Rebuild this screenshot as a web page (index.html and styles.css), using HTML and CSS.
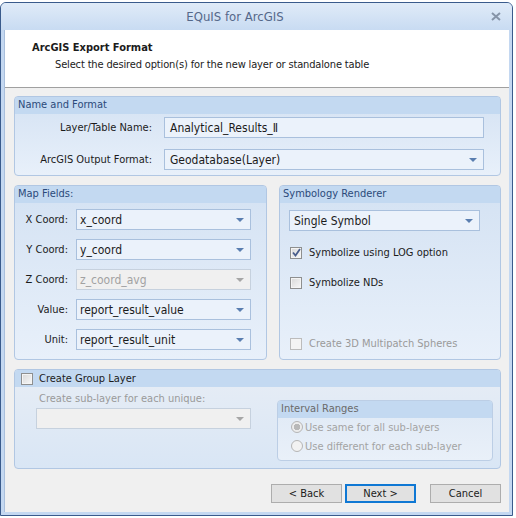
FILE: index.html
```html
<!DOCTYPE html>
<html lang="en">
<head>
    <meta charset="UTF-8">
    <title>EQuIS for ArcGIS</title>
    <link rel="stylesheet" href="styles.css">
</head>
<body>
    <div class="window">
        <div class="titlebar">
            <span class="title">EQuIS for ArcGIS</span>
            <svg class="close" width="10" height="9" viewBox="0 0 10 9">
                <path d="M1 1 L9 8 M9 1 L1 8" stroke="#8694a8" stroke-width="2" fill="none"/>
            </svg>
        </div>
        <div class="client">
            <div class="banner">
                <div class="banner-title">ArcGIS Export Format</div>
                <div class="banner-sub">Select the desired option(s) for the new layer or standalone table</div>
            </div>
            <div class="content">
                <section class="group group-name">
                    <div class="group-head">Name and Format</div>
                    <div class="name-grid">
                        <label>Layer/Table Name:</label>
                        <div class="field">Analytical_Results_Ⅱ</div>
                        <label>ArcGIS Output Format:</label>
                        <div class="combo"><span>Geodatabase(Layer)</span><i class="arrow"></i></div>
                    </div>
                </section>

                <div class="row-2">
                    <section class="group group-map">
                        <div class="group-head">Map Fields:</div>
                        <div class="map-grid">
                            <label>X Coord:</label>
                            <div class="combo"><span>x_coord</span><i class="arrow"></i></div>
                            <label>Y Coord:</label>
                            <div class="combo"><span>y_coord</span><i class="arrow"></i></div>
                            <label>Z Coord:</label>
                            <div class="combo disabled"><span>z_coord_avg</span><i class="arrow"></i></div>
                            <label>Value:</label>
                            <div class="combo"><span>report_result_value</span><i class="arrow"></i></div>
                            <label>Unit:</label>
                            <div class="combo"><span>report_result_unit</span><i class="arrow"></i></div>
                        </div>
                    </section>

                    <section class="group group-sym">
                        <div class="group-head">Symbology Renderer</div>
                        <div class="sym-body">
                            <div class="combo"><span>Single Symbol</span><i class="arrow"></i></div>
                            <div class="check-row row-log">
                                <span class="check">
                                    <svg width="9" height="9" viewBox="0 0 9 9"><path d="M1 4.5 L3.5 7.5 L8 1" stroke="#4a5e8c" stroke-width="1.8" fill="none"/></svg>
                                </span>
                                <span>Symbolize using LOG option</span>
                            </div>
                            <div class="check-row row-nd">
                                <span class="check"></span>
                                <span>Symbolize NDs</span>
                            </div>
                            <div class="check-row row-3d disabled">
                                <span class="check"></span>
                                <span>Create 3D Multipatch Spheres</span>
                            </div>
                        </div>
                    </section>
                </div>

                <section class="group group-layer">
                    <div class="group-head layer-head">
                        <span class="check"></span>
                        <span>Create Group Layer</span>
                    </div>
                    <div class="layer-body">
                        <div class="sublayer">
                            <div class="sublayer-label">Create sub-layer for each unique:</div>
                            <div class="combo disabled"><span></span><i class="arrow"></i></div>
                        </div>
                        <section class="group group-interval">
                            <div class="group-head">Interval Ranges</div>
                            <div class="radio-row">
                                <span class="radio selected"></span>
                                <span>Use same for all sub-layers</span>
                            </div>
                            <div class="radio-row">
                                <span class="radio"></span>
                                <span>Use different for each sub-layer</span>
                            </div>
                        </section>
                    </div>
                </section>

                <div class="buttons">
                    <button class="btn btn-back">&lt; Back</button>
                    <button class="btn btn-next">Next &gt;</button>
                    <button class="btn btn-cancel">Cancel</button>
                </div>
            </div>
        </div>
    </div>
</body>
</html>
```

FILE: styles.css
```css
* {
    box-sizing: border-box;
}
body {
    margin: 0;
    background: #ffffff;
    font-family: "DejaVu Sans Condensed", "DejaVu Sans", sans-serif;
    font-size: 11px;
    color: #1b1b1b;
}
.window {
    margin-top: 2px;
    width: 513px;
    height: 514px;
    border: 1px solid #3a5b8c;
    border-radius: 6px 6px 0 0;
    background: #c4d8f1;
    display: flex;
    flex-direction: column;
}
.titlebar {
    height: 27px;
    flex: none;
    display: flex;
    align-items: center;
    background: linear-gradient(#e0ebf8, #c8dbf2);
    border-radius: 5px 5px 0 0;
}
.title {
    flex: 1;
    text-align: center;
    padding-right: 22px;
    font-size: 13px;
    color: #55688a;
}
.close {
    margin-right: 11px;
}
.client {
    flex: 1;
    margin: 0 3px 3px 3px;
    background: #f0f0f0;
    border-left: 1px solid #a9bfdc;
    display: flex;
    flex-direction: column;
}
.banner {
    height: 58px;
    background: #ffffff;
    border-bottom: 1px solid #a0a0a0;
    padding: 11px 0 0 27px;
}
.banner-title {
    font-weight: bold;
    line-height: 14px;
}
.banner-sub {
    margin-top: 3px;
    padding-left: 23px;
    line-height: 14px;
    letter-spacing: -0.15px;
}
.content {
    padding: 8px 8px 0 9px;
}

/* group boxes */
.group {
    border: 1px solid #b1c7e3;
    border-radius: 4px;
    background: linear-gradient(#d4e2f3, #e8f0fa);
    overflow: hidden;
}
.group-head {
    height: 17px;
    line-height: 16px;
    padding-left: 3px;
    background: #c3d9f1;
    color: #2b4a7a;
}
.group-name {
    height: 80px;
}
.name-grid {
    display: grid;
    grid-template-columns: 130px 320px;
    grid-auto-rows: 21px;
    column-gap: 12px;
    row-gap: 11px;
    padding: 3px 0 0 7px;
    align-items: center;
}
.name-grid label, .map-grid label {
    text-align: right;
    white-space: nowrap;
}
.field, .combo {
    height: 21px;
    border: 1px solid #a9c0dd;
    background: #ebf2fb;
    display: flex;
    align-items: center;
    padding: 0 6px 0 5px;
    font-size: 12px;
}
.combo span {
    flex: 1;
    white-space: nowrap;
}
.arrow {
    width: 0;
    height: 0;
    border-left: 4px solid transparent;
    border-right: 4px solid transparent;
    border-top: 4px solid #5a7eb0;
}
.combo.disabled {
    background: #f0f0f0;
    border-color: #c6d1de;
    color: #a2a2a2;
}
.combo.disabled .arrow {
    border-top-color: #a6a6a6;
}

.row-2 {
    display: flex;
    gap: 12px;
    margin-top: 9px;
}
.group-map {
    width: 253px;
    height: 175px;
}
.map-grid {
    display: grid;
    grid-template-columns: 46px 175px;
    grid-auto-rows: 21px;
    column-gap: 8px;
    row-gap: 9px;
    padding: 6px 0 0 7px;
    align-items: center;
}
.map-grid .combo {
    padding-left: 3px;
}
.group-sym {
    width: 222px;
    height: 175px;
}
.sym-body {
    padding: 7px 0 0 9px;
}
.sym-body .combo {
    width: 191px;
    padding-left: 4px;
}
.check-row {
    display: flex;
    align-items: center;
    gap: 7px;
    height: 13px;
    padding-left: 1px;
}
.row-log {
    margin-top: 15px;
}
.row-nd {
    margin-top: 17px;
}
.row-3d {
    margin-top: 48px;
}
.check-row.disabled {
    color: #9a9a9a;
}
.check {
    width: 12px;
    height: 12px;
    flex: none;
    border: 1px solid #8e8f8f;
    background: linear-gradient(135deg, #d8d8d8, #f8f8f8);
    box-shadow: inset 0 0 0 1px #f4f4f4;
    display: flex;
    align-items: center;
    justify-content: center;
}
.disabled .check {
    border-color: #bcbcbc;
    background: #f4f4f4;
}

.group-layer {
    height: 100px;
    margin-top: 9px;
    background: linear-gradient(#e7edf5, #d9e6f5);
}
.layer-head {
    display: flex;
    align-items: center;
    gap: 6px;
    padding-left: 6px;
    color: #1b1b1b;
}
.layer-body {
    display: flex;
    padding: 0 7px 0 21px;
}
.sublayer {
    width: 215px;
    padding-top: 5px;
}
.sublayer-label {
    line-height: 14px;
    padding-left: 3px;
    color: #9a9a9a;
    margin-bottom: 2px;
}
.group-interval {
    width: 216px;
    height: 61px;
    margin: 13px 0 0 26px;
    border-color: #bccee5;
    background: linear-gradient(#dfe9f5, #e9f0f9);
}
.group-interval .group-head {
    color: #6a6a6a;
}
.radio-row {
    display: flex;
    align-items: center;
    gap: 2px;
    height: 14px;
    padding-left: 13px;
    margin-top: 2px;
    color: #a3a3a3;
}
.radio-row + .radio-row {
    margin-top: 5px;
}
.radio {
    width: 12px;
    height: 12px;
    border-radius: 50%;
    border: 1px solid #b5b5b5;
    background: #f2f2f2;
    flex: none;
}
.radio.selected {
    background: radial-gradient(circle, #b8b8b8 0 3px, #ececec 3.5px);
}

.buttons {
    display: flex;
    justify-content: flex-end;
    margin-top: 15px;
}
.btn {
    width: 71px;
    height: 19px;
    border: 1px solid #adadad;
    background: #e1e1e1;
    font-family: inherit;
    font-size: 11px;
    color: #1b1b1b;
    padding: 0;
}
.btn-next {
    margin-left: 3px;
    border: 2px solid #0f78d4;
}
.btn-cancel {
    margin-left: 14px;
}
```
